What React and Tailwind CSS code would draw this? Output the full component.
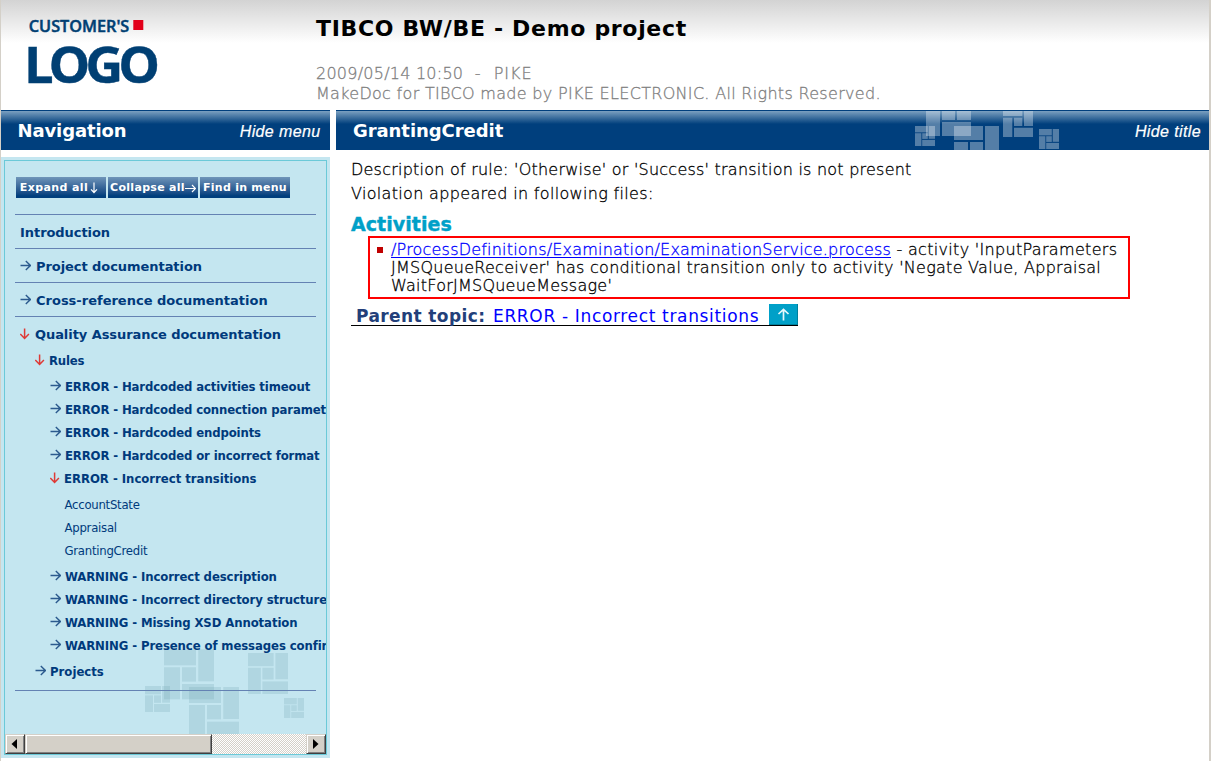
import React from 'react';

const LIGHT = "font-['DejaVu_Sans',Verdana,sans-serif] font-extralight [-webkit-text-stroke:0.3px_currentColor]";
const VERDANA = "font-['DejaVu_Sans',Verdana,sans-serif]";
const TAHOMA = "font-['DejaVu_Sans_Condensed',Tahoma,sans-serif]";

function Arrow({ down = false, className = '' }) {
  return down ? (
    <svg width="11" height="12" viewBox="0 0 11 12" fill="none" stroke="#de3a36" strokeWidth="1.5" className={className}>
      <path d="M4.6 0.5V10.5M0.3 6L4.6 10.4L8.9 6" />
    </svg>
  ) : (
    <svg width="11" height="11" viewBox="0 0 11 11" fill="none" stroke="#2b5a8e" strokeWidth="1.4" className={className}>
      <path d="M0.5 5.5H10.5M5.8 1L10.4 5.5L5.8 10" />
    </svg>
  );
}

function Logo() {
  return (
    <svg width="140" height="76" viewBox="0 0 140 76" className="mt-3.5 ml-[24px] shrink-0 overflow-visible">
      <g fill="#003f73" stroke="#003f73" fontFamily="'Open Sans','Noto Sans',sans-serif">
        <text x="3.8" y="17.8" fontSize="16.5" fontWeight="600" strokeWidth="0.5" textLength="100.5" lengthAdjust="spacingAndGlyphs">CUSTOMER'S</text>
        <text x="-0.9" y="69" fontSize="50" fontWeight="700" strokeWidth="0.4" textLength="129.5" lengthAdjust="spacing" transform="scale(1.05 1)">LOGO</text>
      </g>
      <rect x="108.3" y="6" width="10" height="10" fill="#e2001a" />
    </svg>
  );
}

function Pinwheel({ x, y, w, h = w }) {
  return (
    <g transform={`translate(${x} ${y}) scale(${w / 50} ${h / 50})`}>
      <rect width="32" height="16" />
      <rect x="34.3" width="15.7" height="32" />
      <rect y="18" width="16" height="32" />
      <rect x="18" y="18" width="14" height="14.3" />
      <rect x="18" y="34.7" width="32" height="15.3" />
    </g>
  );
}

function Bar({ title, action, tracking, pad, children }) {
  return (
    <div className={`relative flex h-10 items-center justify-between border-t border-[#003f7d] bg-[#003f7d] bg-[linear-gradient(#7ba0c0_0px,#003f7d_13px)] text-white ${pad}`}>
      {children}
      <h2 className={`${VERDANA} relative pb-px text-[18px] font-bold ${tracking}`}>{title}</h2>
      <a className="relative pt-[3px] font-['Liberation_Sans',Arial,sans-serif] text-[16px] tracking-[0.38px] italic [-webkit-text-stroke:0.2px_white]">{action}</a>
    </div>
  );
}

function BarSquares() {
  return (
    <svg width="150" height="39" viewBox="912 111 150 39" fill="#fff" fillOpacity="0.33" className="absolute top-0 left-[576px]">
      <path d="M926 111h14v25h-14zM942 111h13v9h-13zM957 111h14v9h-14zM942 122h29v14h-29z" />
      <path d="M954 126h29v14h-29zM985 126h14v24h-14zM954 142h14v8h-14zM970 142h13v8h-13z" />
      <path d="M1003 111h19.3v5h-19.3zM1024 111h9v15h-9zM1003 117.7h9.3v19.3h-9.3zM1014 117.7h8.3v8.3h-8.3zM1014 127.7h19v9.3h-19z" />
      <Pinwheel x={915} y={126} w={20} />
      <Pinwheel x={1039} y={129} w={20} />
    </svg>
  );
}

function MenuButton({ children }) {
  return (
    <button className={`${VERDANA} flex h-[21px] w-[90px] items-center justify-center pt-px whitespace-nowrap bg-linear-to-b from-[#6f95b9] to-[#003f7d] to-90% text-[11px] font-bold text-white`}>
      {children}
    </button>
  );
}

const levels = { 1: 'pl-[5px]', 2: 'pl-5', 3: 'pl-[35px]' };

function Row({ level, down, plain, font, children }) {
  const gap = level === 1 ? (down ? 'mr-1' : 'mr-[5px]') : down ? 'mr-[3px]' : 'mr-1';
  return (
    <div className={`flex h-[23px] items-center whitespace-nowrap text-[13px] leading-[23px] font-bold ${levels[level]} ${font}`}>
      {!plain && <Arrow down={down} className={`${gap} shrink-0 ${down ? 'mb-0.5' : 'mb-[3px]'}`} />}
      {children}
    </div>
  );
}

const errors = ['Hardcoded activities timeout', 'Hardcoded connection parameters', 'Hardcoded endpoints', 'Hardcoded or incorrect format'];
const warnings = ['Incorrect description', 'Incorrect directory structure', 'Missing XSD Annotation', 'Presence of messages confirmation'];

function Navigation() {
  const top = 'border-t border-[#6482b3] pt-1.5 pb-1';
  return (
    <nav className="mx-2.5 mt-4 flex-1 text-[#003a7c]">
      <div className={top}><Row level={1} plain font={`${VERDANA} tracking-[-0.06px]`}>Introduction</Row></div>
      <div className={top}><Row level={1} font={`${VERDANA} tracking-[-0.06px]`}>Project documentation</Row></div>
      <div className={top}><Row level={1} font={VERDANA}>Cross-reference documentation</Row></div>
      <div className="border-y border-[#6482b3] pt-1.5 pb-[7px]">
        <Row level={1} down font={`${VERDANA} tracking-[-0.07px]`}>Quality Assurance documentation</Row>
        <div className="mt-[3px]"><Row level={2} down font={`${TAHOMA} tracking-[-0.2px]`}>Rules</Row></div>
        <div className="mt-[3px]">
          {errors.map((t) => <Row key={t} level={3} font={`${TAHOMA} tracking-[-0.13px]`}>ERROR - {t}</Row>)}
          <Row level={3} down font={`${TAHOMA} tracking-[-0.02px]`}>ERROR - Incorrect transitions</Row>
        </div>
        <ul className={`${TAHOMA} mt-[3px] pl-[49.5px] text-[13px] leading-[23px] font-normal tracking-[-0.25px]`}>
          <li>AccountState</li>
          <li>Appraisal</li>
          <li>GrantingCredit</li>
        </ul>
        <div className="mt-[3px]">
          {warnings.map((t) => <Row key={t} level={3} font={`${TAHOMA} tracking-[-0.1px]`}>WARNING - {t}</Row>)}
        </div>
        <div className="mt-[3px]"><Row level={2} font={TAHOMA}>Projects</Row></div>
      </div>
    </nav>
  );
}

function ScrollPart({ className, children }) {
  return (
    <div className={`flex h-full items-center justify-center border border-t-[#d4d0c8] border-r-[#404040] border-b-[#404040] border-l-[#d4d0c8] bg-[#d4d0c8] shadow-[inset_1px_1px_0_#fff,inset_-1px_-1px_0_#808080] ${className}`}>
      {children}
    </div>
  );
}

export default function App() {
  return (
    <div className="flex h-[761px] w-[1211px] flex-col overflow-hidden border-r-2 border-l border-[#d4d0c8] bg-white">
      <header className="flex h-[110px] shrink-0 bg-[linear-gradient(#d3d3d3_0px,#ffffff_43px)]">
        <Logo />
        <div className="ml-[151px] pt-[14px]">
          <h1 className={`${VERDANA} text-[22px] leading-[30px] font-bold tracking-[0.68px] text-black`}>TIBCO BW/BE - Demo project</h1>
          <div className={`${LIGHT} mt-5 text-[16px] leading-5 whitespace-pre text-[#808080]`}>
            <p className="tracking-[0.24px]">2009/05/14 10:50 <span className="tracking-[1px]"> -  PIKE</span></p>
            <p className="tracking-[0.31px]">MakeDoc for TIBCO made by PIKE ELECTRONIC. All Rights Reserved.</p>
          </div>
        </div>
      </header>

      <div className="flex min-h-0 flex-1 gap-1.5">
        <aside className="w-[329px] shrink-0">
          <Bar title="Navigation" action="Hide menu" tracking="tracking-[-0.11px]" pad="pl-[16.5px] pr-[9.5px]" />
          <div className="mt-[7px] h-[601px] bg-[#c4e6f0] p-[3px]">
            <div className="relative flex h-full flex-col overflow-hidden border border-[#6bc9d8]">
              <svg width="160" height="85" viewBox="144 649 160 85" fill="#74a6b4" fillOpacity="0.25" className="absolute bottom-5 left-[139px]">
                <Pinwheel x={164} y={649.3} w={50} />
                <Pinwheel x={189} y={687} w={50} />
                <Pinwheel x={248} y={653} w={40} h={41} />
                <Pinwheel x={145} y={686} w={25} h={26} />
                <Pinwheel x={284} y={698} w={20} />
              </svg>
              <div className="relative flex min-h-0 flex-1 flex-col">
                <div className="mt-4 ml-[11px] flex gap-0.5">
                  <MenuButton>
                    <span className="tracking-[0.4px]">Expand all</span>
                    <svg width="8" height="12" viewBox="0 0 8 12" fill="none" stroke="#fff" strokeWidth="1.2" className="mr-1 mb-px ml-0.5"><path d="M4 0.5V10.5M1 7.3L4 10.5L7 7.3" /></svg>
                  </MenuButton>
                  <MenuButton>
                    <span className="pt-px tracking-[0.3px]">Collapse all</span>
                    <svg width="11" height="9" viewBox="0 0 11 9" fill="none" stroke="#fff" strokeWidth="1.2"><path d="M0 4.5H10.5M7 1L10.5 4.5L7 8" /></svg>
                  </MenuButton>
                  <MenuButton><span className="pt-px tracking-[0.25px]">Find in menu</span></MenuButton>
                </div>
                <Navigation />
              </div>
              <div className="relative flex h-5 shrink-0 bg-[repeating-conic-gradient(#ffffff_0_25%,#d4d0c8_0_50%)] bg-[length:2px_2px]">
                <ScrollPart className="w-5"><svg width="6" height="10" className="mr-0.5"><path d="M6 0V10L0.5 5z" /></svg></ScrollPart>
                <ScrollPart className="w-[187px]" />
                <ScrollPart className="ml-auto w-5"><svg width="6" height="10"><path d="M0 0V10L5.5 5z" /></svg></ScrollPart>
              </div>
            </div>
          </div>
        </aside>

        <main className="flex-1">
          <Bar title="GrantingCredit" action="Hide title" tracking="tracking-[-0.06px]" pad="pl-[17px] pr-[8px]">
            <BarSquares />
          </Bar>
          <div className={`${LIGHT} pt-2 pl-[15px] text-[16px] leading-6 whitespace-nowrap text-black`}>
            <p className="tracking-[0.23px]">Description of rule: 'Otherwise' or 'Success' transition is not present</p>
            <p className="tracking-[0.33px]">Violation appeared in following files:</p>
            <h3 className="mt-1.5 text-[19px] leading-6 font-bold tracking-[0.05px] text-[#00a0c8] [-webkit-text-stroke:0.4px_currentColor]">Activities</h3>
            <div className="ml-[17px] flex h-[63px] w-[762px] gap-2 border-2 border-[#ff0000] pt-[3px] pl-[7px] leading-[18px]">
              <span className="mt-[6px] size-[6px] shrink-0 bg-[#c00000]" />
              <div>
                <p className="tracking-[0.32px]">
                  <a className="tracking-[0.2px] text-[#0000ff] underline decoration-1 underline-offset-2">/ProcessDefinitions/Examination/ExaminationService.process</a> - activity 'InputParameters
                </p>
                <p className="tracking-[0.26px]">JMSQueueReceiver' has conditional transition only to activity 'Negate Value, Appraisal</p>
                <p className="tracking-[0.24px]">WaitForJMSQueueMessage'</p>
              </div>
            </div>
            <div className="mt-[5px] flex h-[22px] w-[447px] border-b border-black text-[17px] leading-[24px] [-webkit-text-stroke:0px]">
              <span className="ml-[5px] w-[137px] font-bold tracking-[0.4px] text-[#233f7a]">Parent topic:</span>
              <a className="font-normal tracking-[0.66px] text-[#0000ff]">ERROR - Incorrect transitions</a>
              <span className="ml-auto flex h-[21px] w-[29px] items-center justify-center bg-[#00a0c8] shadow-[inset_-1px_-1px_0_#007f9c]">
                <svg width="13" height="13" viewBox="0 0 13 13" fill="none" stroke="#e6f7fb" strokeWidth="1.7"><path d="M6.5 12.5V1.5M1.5 6L6.5 1.3L11.5 6" /></svg>
              </span>
            </div>
          </div>
        </main>
      </div>
    </div>
  );
}
